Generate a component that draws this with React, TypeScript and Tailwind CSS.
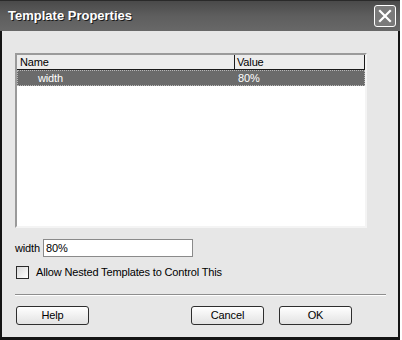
export default function App() {
  const txt = "text-[11px] tracking-[-0.15px] font-['Tahoma','Liberation_Sans',sans-serif] text-black";
  return (
    <div className="w-[402px] h-[340px] bg-white">
      <div className="w-[400px] h-[340px] flex flex-col bg-[#e7e7e7] border-l-2 border-r-2 border-b-[3px] border-[#141414]">
        {/* title bar */}
        <div className="h-[31px] -ml-[2px] -mr-[2px] flex items-center justify-between pl-[8px] pr-[4px] bg-gradient-to-b from-[#4a4a4a] via-[#5e5e5e] to-[#686868] border-t border-[#2a2a2a]">
          <span className="text-white text-[13px] font-bold [text-shadow:1px_1px_0_#1a1a1a] font-['Liberation_Sans',sans-serif]">Template Properties</span>
          <div className="w-[22px] h-[22px] rounded-[3px] border border-white bg-[#7a7a7a] flex items-center justify-center">
            <svg width="14" height="14" viewBox="0 0 14 14">
              <path d="M2 2 L12 12 M12 2 L2 12" stroke="white" strokeWidth="2.2" strokeLinecap="square" />
            </svg>
          </div>
        </div>

        <div className="flex flex-col pl-[13px] pt-[22px]">
          {/* list */}
          <div className={`w-[352px] h-[175px] bg-white border-2 border-t-[#9a9a9a] border-l-[#9a9a9a] border-b-[#f4f4f4] border-r-[#f4f4f4] flex flex-col ${txt}`}>
            <div className="flex h-[15px] bg-[#ececec] border-b border-[#1a1a1a]">
              <div className="w-[218px] border-r border-[#1a1a1a] pl-[3px] leading-[14px]">Name</div>
              <div className="flex-1 border-r border-[#1a1a1a] pl-[2px] leading-[14px]">Value</div>
            </div>
            <div className="flex h-[16px] bg-[#6b6b6b] border border-dotted border-[#b8b8b8] text-white">
              <div className="w-[218px] pl-[20px] leading-[14px]">width</div>
              <div className="flex-1 pl-[2px] leading-[14px]">80%</div>
            </div>
          </div>

          {/* width field */}
          <div className={`flex items-center mt-[11px] ${txt}`}>
            <span className="w-[28px]">width</span>
            <div className="w-[150px] h-[18px] bg-white border border-[#8a8a8a] pl-[2px] leading-[16px]">80%</div>
          </div>

          {/* checkbox */}
          <div className={`flex items-center mt-[7px] ml-[1px] ${txt}`}>
            <div className="w-[13px] h-[13px] border border-[#2a2a2a] bg-gradient-to-br from-[#d8d8d8] to-[#ffffff]" />
            <span className="ml-[7px]">Allow Nested Templates to Control This</span>
          </div>

          {/* separator */}
          <div className="w-[371px] h-[2px] mt-[13px] border-t border-[#8e8e8e] border-b border-b-white" />

          {/* buttons */}
          <div className={`flex mt-[10px] ml-[1px] ${txt}`}>
            <button className="w-[73px] h-[19px] rounded-[3px] border border-[#2e2e2e] bg-gradient-to-b from-white to-[#e2e2e2] leading-[17px]">Help</button>
            <button className="w-[73px] h-[19px] ml-[102px] rounded-[3px] border border-[#2e2e2e] bg-gradient-to-b from-white to-[#e2e2e2] leading-[17px]">Cancel</button>
            <button className="w-[73px] h-[19px] ml-[15px] rounded-[3px] border border-[#2e2e2e] bg-gradient-to-b from-white to-[#e2e2e2] leading-[17px]">OK</button>
          </div>
        </div>
      </div>
    </div>
  );
}
